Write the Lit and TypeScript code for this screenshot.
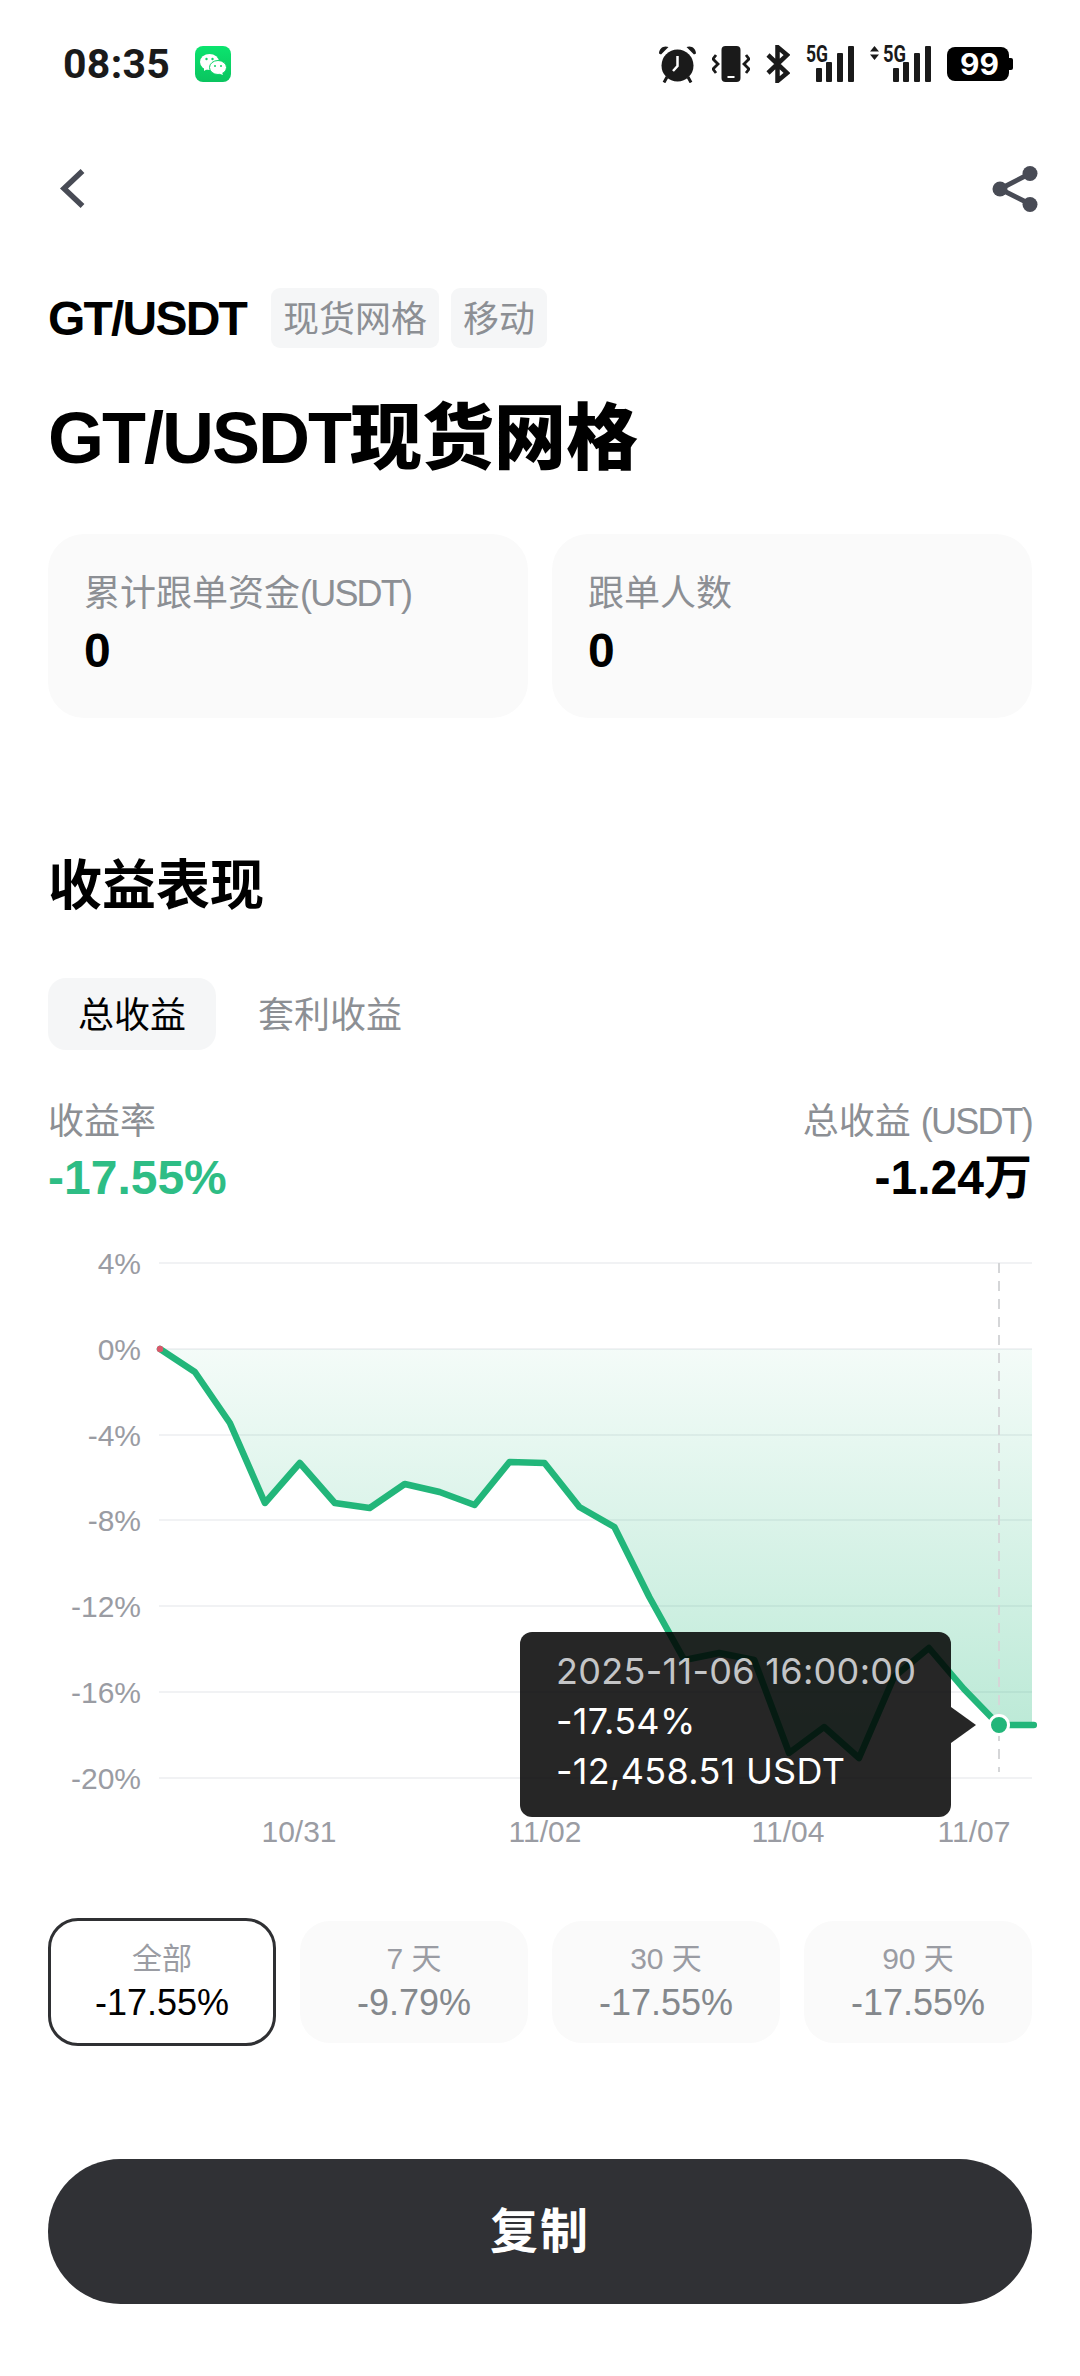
import { LitElement, html, css, svg } from "lit";
import { customElement } from "lit/decorators.js";

const X0 = 160;
const STEP = 34.95;
const PTS = [1349,1372,1423,1503,1463,1503,1508,1484,1492,1505,1462,1463,1507,1527,1597,1660,1653,1660,1753,1727,1758,1677,1648,1689,1725,1725];
const GRID: [string, number][] = [["4%",1263],["0%",1349],["-4%",1435],["-8%",1520],["-12%",1606],["-16%",1692],["-20%",1778]];
const XL: [string, number][] = [["10/31",299],["11/02",545],["11/04",788],["11/07",974]];
const PERIODS = [["全部","-17.55%"],["7 天","-9.79%"],["30 天","-17.55%"],["90 天","-17.55%"]];

@customElement("app-root")
export class AppRoot extends LitElement {
  static styles = css`
    :host { display:block; width:1080px; height:2376px; background:#fff; overflow:hidden;
      font-family: "Liberation Sans", "Noto Sans CJK SC", sans-serif; color:#000; }
    .status { height:128px; display:flex; align-items:center; padding:0 67px 0 63px; }
    .time { font-family:Roboto, sans-serif; font-size:41px; font-weight:700; color:#1a1a1a; line-height:1; letter-spacing:.3px; }
    .wechat { width:36px; height:36px; margin-left:25px; display:block; }
    .sys { margin-left:auto; display:flex; align-items:center; gap:16px; }
    .sys svg { display:block; }
    .sig { margin-top:-6px; }
    .g5 { font-family:Roboto, sans-serif; font-weight:700; font-size:23px; fill:#1a1a1a; }
    .bat { font-family:Inter, sans-serif; font-weight:700; font-size:30px; fill:#fff; }
    .nav { height:72px; margin-top:26px; display:flex; align-items:center; justify-content:space-between; padding:0 40px 0 58px; }
    .nav svg { display:block; }
    .nav .share { margin-bottom:3px; }
    .tags { height:60px; margin-top:62px; padding:0 48px; display:flex; align-items:center; }
    .pair { font-size:48px; font-weight:700; letter-spacing:-1.8px; margin-right:25px; }
    .tag { height:60px; line-height:64px; padding:0 12px; font-size:36px; color:#8c8f94; background:#f5f6f7; border-radius:9px; margin-right:12px; }
    .title { height:100px; line-height:100px; margin:40px 0 0; padding:0 48px; font-size:72px; font-weight:900; white-space:nowrap; }
    .title b { font-weight:700; letter-spacing:-2px; }
    .cards { margin-top:46px; padding:0 48px; display:grid; grid-template-columns:1fr 1fr; gap:24px; }
    .card { height:184px; background:#fafafa; border-radius:36px; padding:38px 36px 0; box-sizing:border-box; }
    .card-l { font-size:36px; line-height:44px; color:#8c8f94; }
    .lat { letter-spacing:-1.8px; }
    .card-v { font-size:48px; line-height:56px; font-weight:700; margin-top:7px; }
    .h2 { height:76px; line-height:80px; margin:128px 0 0; padding:0 48px; font-size:54px; font-weight:700; }
    .tabs { margin-top:56px; padding:0 48px; display:flex; gap:12px; }
    .tab { height:72px; line-height:76px; padding:0 30px; font-size:36px; color:#8c8f94; border-radius:18px; }
    .tab.on { background:#f5f6f7; color:#000; }
    .metrics { margin-top:50px; height:120px; padding:0 48px; display:flex; justify-content:space-between; }
    .m-r { text-align:right; }
    .m-l { font-size:36px; line-height:44px; color:#8c8f94; }
    .m-v { font-size:48px; line-height:56px; font-weight:700; margin-top:6px; white-space:nowrap; }
    .green { color:#2ebd85; }
    .chart { position:relative; height:620px; margin-top:20px; }
    .chart > svg { display:block; }
    .ax { font-size:30px; fill:#9a9ca3; }
    .tip { position:absolute; left:520px; top:392px; width:431px; height:185px; box-sizing:border-box;
      background:rgba(0,0,0,.85); border-radius:12px; padding:14px 36px 0; color:#fff; font-family:Inter, sans-serif; font-size:36px; letter-spacing:.3px; line-height:50px; white-space:nowrap; }
    .tip .d { color:#c4c5c7; }
    .tip::after { content:""; position:absolute; left:100%; top:75px; border-left:25px solid rgba(0,0,0,.85); border-top:18px solid transparent; border-bottom:18px solid transparent; }
    .periods { margin-top:58px; padding:0 48px; display:grid; grid-template-columns:repeat(4,1fr); gap:24px; align-items:center; }
    .p { height:122px; box-sizing:border-box; background:#fafafa; border-radius:30px; text-align:center; padding-top:20px; }
    .p.on { height:128px; background:#fff; border:3px solid #2f3033; padding-top:20px; }
    .p-l { font-size:30px; line-height:36px; color:#9a9ca3; }
    .p-v { font-size:36px; line-height:42px; color:#84888c; margin-top:5px; }
    .p.on .p-v { color:#000; }
    .btn { margin:113px 48px 0; height:145px; line-height:145px; border-radius:73px; background:#303135; color:#fff; text-align:center; font-size:48px; font-weight:600; letter-spacing:2px; }
  `;

  render() {
    const pts = PTS.map((y, i) => `${(X0 + i * STEP).toFixed(1)},${y}`).join(" ");
    return html`
      <div class="status">
        <span class="time">08:35</span>
        <svg class="wechat" viewBox="0 0 36 36">
          <defs><linearGradient id="wg" x1="0" y1="0" x2="0" y2="1"><stop offset="0" stop-color="#0be46e"/><stop offset="1" stop-color="#0ac45f"/></linearGradient></defs>
          <rect width="36" height="36" rx="8" fill="url(#wg)"/>
          <ellipse cx="14.500" cy="16" rx="9.500" ry="8" fill="#fff"/><path d="M9 21l0 4 4-2.500z" fill="#fff"/>
          <ellipse cx="23" cy="21.500" rx="8.500" ry="7" fill="#fff" stroke="#0bd466" stroke-width="1"/><path d="M27 26.500l1 2.500-4-1.500z" fill="#fff"/>
          <circle cx="11.500" cy="13" r="1.200" fill="#0bd466"/><circle cx="17.500" cy="13" r="1.200" fill="#0bd466"/>
          <circle cx="20" cy="20" r="1" fill="#0bd466"/><circle cx="26" cy="20" r="1" fill="#0bd466"/>
        </svg>
        <div class="sys">
          <svg width="37" height="38" viewBox="0 0 37 38">
            <circle cx="18.500" cy="20.500" r="16" fill="#1a1a1a"/>
            <path d="M18.500 11v10l-4.500 5" fill="none" stroke="#fff" stroke-width="2.500"/>
            <path d="M0 8.500C0 3 5 0 9.500 2L2 9.500z M37 8.500C37 3 32 0 27.500 2L35 9.500z" fill="#1a1a1a"/>
            <path d="M8 32l-3 5.500M29 32l3 5.500" stroke="#1a1a1a" stroke-width="3"/>
          </svg>
          <svg width="38" height="36" viewBox="0 0 38 36">
            <rect x="9.500" y="0" width="19" height="36" rx="4" fill="#1a1a1a"/><rect x="15.500" y="30" width="7" height="2" fill="#fff"/>
            <path d="M4 9L1 13l5 5-5 5 3 4M34 9l3 4-5 5 5 5-3 4" fill="none" stroke="#1a1a1a" stroke-width="2.800"/>
          </svg>
          <svg width="24" height="38" viewBox="0 0 24 38">
            <path d="M2 10l19 18-9.500 8V2L21 10 2 28" fill="none" stroke="#1a1a1a" stroke-width="4.500"/>
          </svg>
          <svg class="sig" width="48" height="44" viewBox="0 -6 48 44">
            <text class="g5" x="0" y="16.500" textLength="22" lengthAdjust="spacingAndGlyphs">5G</text>
            <rect x="10" y="23" width="6" height="14" rx="1" fill="#1a1a1a"/><rect x="20" y="17" width="6" height="20" rx="1" fill="#1a1a1a"/><rect x="31" y="8" width="6" height="29" rx="1" fill="#1a1a1a"/><rect x="42" y="1" width="6" height="36" rx="1" fill="#1a1a1a"/>
          </svg>
          <svg class="sig" width="61" height="44" viewBox="0 -6 61 44">
            <path d="M0 6.500L4.500 1 9 6.500zM0 9.500L4.500 15 9 9.500z" fill="#1a1a1a"/>
            <text class="g5" x="13" y="16.500" textLength="23" lengthAdjust="spacingAndGlyphs">5G</text>
            <rect x="23" y="23" width="6" height="14" rx="1" fill="#1a1a1a"/><rect x="33" y="17" width="6" height="20" rx="1" fill="#1a1a1a"/><rect x="44" y="8" width="6" height="29" rx="1" fill="#1a1a1a"/><rect x="55" y="1" width="6" height="36" rx="1" fill="#1a1a1a"/>
          </svg>
          <svg width="66" height="34" viewBox="0 0 66 34">
            <rect width="62" height="34" rx="8" fill="#000"/><path d="M62 11h2a2 2 0 0 1 2 2v8a2 2 0 0 1-2 2h-2z" fill="#000"/>
            <text class="bat" x="13" y="28">99</text>
          </svg>
        </div>
      </div>

      <div class="nav">
        <svg width="30" height="44" viewBox="0 0 30 44"><path d="M24.500 3L6 20.500 24.500 38" fill="none" stroke="#484b55" stroke-width="5.500"/></svg>
        <svg class="share" width="48" height="48" viewBox="0 0 48 48">
          <path d="M38 8.500L8 24 38 39" fill="none" stroke="#484b55" stroke-width="5"/>
          <circle cx="38" cy="8.500" r="7.500" fill="#484b55"/><circle cx="8" cy="24" r="7.500" fill="#484b55"/><circle cx="38" cy="39.500" r="7.500" fill="#484b55"/>
        </svg>
      </div>

      <div class="tags"><span class="pair">GT/USDT</span><span class="tag">现货网格</span><span class="tag">移动</span></div>
      <h1 class="title"><b>GT/USDT</b>现货网格</h1>

      <div class="cards">
        <div class="card"><div class="card-l">累计跟单资金<span class="lat">(USDT)</span></div><div class="card-v">0</div></div>
        <div class="card"><div class="card-l">跟单人数</div><div class="card-v">0</div></div>
      </div>

      <h2 class="h2">收益表现</h2>
      <div class="tabs"><div class="tab on">总收益</div><div class="tab">套利收益</div></div>

      <div class="metrics">
        <div><div class="m-l">收益率</div><div class="m-v green">-17.55%</div></div>
        <div class="m-r"><div class="m-l">总收益 <span class="lat">(USDT)</span></div><div class="m-v">-1.24万</div></div>
      </div>

      <div class="chart">
        <svg width="1080" height="620" viewBox="0 1240 1080 620">
          <defs>
            <linearGradient id="fill" gradientUnits="userSpaceOnUse" x1="0" y1="1349" x2="0" y2="1725">
              <stop offset="0" stop-color="#22b87a" stop-opacity=".05"/><stop offset="1" stop-color="#22b87a" stop-opacity=".3"/>
            </linearGradient>
            <clipPath id="c"><rect x="155" y="1250" width="877" height="560"/></clipPath>
          </defs>
          ${GRID.map(([t, y]) => svg`
            <line x1="159" x2="1032" y1=${y} y2=${y} stroke="#f1f2f4" stroke-width="2"/>
            <text class="ax" x="141" y=${y + 11} text-anchor="end">${t}</text>`)}
          <polygon clip-path="url(#c)" points="160,1349 ${pts} 1037,1349" fill="url(#fill)"/>
          ${XL.map(([t, x]) => svg`<text class="ax" x=${x} y="1842" text-anchor="middle">${t}</text>`)}
          <line x1="999" x2="999" y1="1263" y2="1772" stroke="#d5d6d8" stroke-width="2" stroke-dasharray="10 8"/>
          <polyline points=${pts} fill="none" stroke="#22b67a" stroke-width="6.500" stroke-linejoin="round" stroke-linecap="round"/>
          <circle cx="160" cy="1349" r="3.200" fill="#d9586b"/>
          <circle cx="999" cy="1725" r="9.500" fill="#22b67a" stroke="#fff" stroke-width="3"/>
        </svg>
        <div class="tip">
          <div class="d">2025-11-06 16:00:00</div>
          <div>-17.54%</div>
          <div>-12,458.51 USDT</div>
        </div>
      </div>

      <div class="periods">
        ${PERIODS.map(([l, v], i) => html`<div class="p ${i === 0 ? "on" : ""}"><div class="p-l">${l}</div><div class="p-v">${v}</div></div>`)}
      </div>

      <div class="btn">复制</div>
    `;
  }
}
